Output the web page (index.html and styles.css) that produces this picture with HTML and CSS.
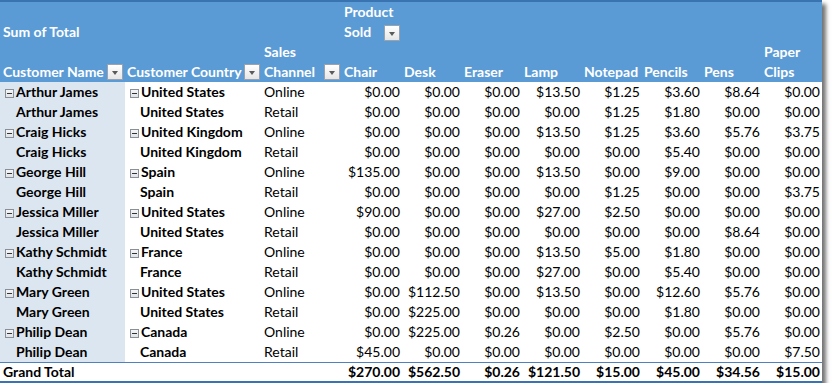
FILE: index.html
```html
<!DOCTYPE html>
<html>
<head>
<meta charset="utf-8">
<link rel="stylesheet" href="styles.css">
</head>
<body>
<div class="sheet">
<table class="pivot">
  <colgroup>
    <col class="c-name"><col class="c-country"><col class="c-channel">
    <col class="c-num"><col class="c-num"><col class="c-num"><col class="c-num">
    <col class="c-num"><col class="c-num"><col class="c-num"><col class="c-num">
  </colgroup>
  <thead>
    <tr class="hrow">
      <th class="h-first">Sum of Total</th>
      <th></th>
      <th></th>
      <th colspan="8" class="h-prod">Product<br>Sold<span class="dd dd-inline"></span></th>
    </tr>
    <tr class="hrow">
      <th class="h-first"><div class="hf"><span>Customer Name</span><span class="dd"></span></div></th>
      <th><div class="hf"><span>Customer Country</span><span class="dd"></span></div></th>
      <th><div class="hf"><span>Sales<br>Channel</span><span class="dd"></span></div></th>
      <th>Chair</th><th>Desk</th><th>Eraser</th><th>Lamp</th>
      <th>Notepad</th><th>Pencils</th><th>Pens</th><th>Paper<br>Clips</th>
    </tr>
  </thead>
  <tbody>
    <tr><td class="nm"><span class="mn"></span>Arthur James</td><td class="ct"><span class="mn"></span>United States</td><td class="ch">Online</td><td>$0.00</td><td>$0.00</td><td>$0.00</td><td>$13.50</td><td>$1.25</td><td>$3.60</td><td>$8.64</td><td>$0.00</td></tr>
    <tr><td class="nm sub">Arthur James</td><td class="ct sub">United States</td><td class="ch">Retail</td><td>$0.00</td><td>$0.00</td><td>$0.00</td><td>$0.00</td><td>$1.25</td><td>$1.80</td><td>$0.00</td><td>$0.00</td></tr>
    <tr><td class="nm"><span class="mn"></span>Craig Hicks</td><td class="ct"><span class="mn"></span>United Kingdom</td><td class="ch">Online</td><td>$0.00</td><td>$0.00</td><td>$0.00</td><td>$13.50</td><td>$1.25</td><td>$3.60</td><td>$5.76</td><td>$3.75</td></tr>
    <tr><td class="nm sub">Craig Hicks</td><td class="ct sub">United Kingdom</td><td class="ch">Retail</td><td>$0.00</td><td>$0.00</td><td>$0.00</td><td>$0.00</td><td>$0.00</td><td>$5.40</td><td>$0.00</td><td>$0.00</td></tr>
    <tr><td class="nm"><span class="mn"></span>George Hill</td><td class="ct"><span class="mn"></span>Spain</td><td class="ch">Online</td><td>$135.00</td><td>$0.00</td><td>$0.00</td><td>$13.50</td><td>$0.00</td><td>$9.00</td><td>$0.00</td><td>$0.00</td></tr>
    <tr><td class="nm sub">George Hill</td><td class="ct sub">Spain</td><td class="ch">Retail</td><td>$0.00</td><td>$0.00</td><td>$0.00</td><td>$0.00</td><td>$1.25</td><td>$0.00</td><td>$0.00</td><td>$3.75</td></tr>
    <tr><td class="nm"><span class="mn"></span>Jessica Miller</td><td class="ct"><span class="mn"></span>United States</td><td class="ch">Online</td><td>$90.00</td><td>$0.00</td><td>$0.00</td><td>$27.00</td><td>$2.50</td><td>$0.00</td><td>$0.00</td><td>$0.00</td></tr>
    <tr><td class="nm sub">Jessica Miller</td><td class="ct sub">United States</td><td class="ch">Retail</td><td>$0.00</td><td>$0.00</td><td>$0.00</td><td>$0.00</td><td>$0.00</td><td>$0.00</td><td>$8.64</td><td>$0.00</td></tr>
    <tr><td class="nm"><span class="mn"></span>Kathy Schmidt</td><td class="ct"><span class="mn"></span>France</td><td class="ch">Online</td><td>$0.00</td><td>$0.00</td><td>$0.00</td><td>$13.50</td><td>$5.00</td><td>$1.80</td><td>$0.00</td><td>$0.00</td></tr>
    <tr><td class="nm sub">Kathy Schmidt</td><td class="ct sub">France</td><td class="ch">Retail</td><td>$0.00</td><td>$0.00</td><td>$0.00</td><td>$27.00</td><td>$0.00</td><td>$5.40</td><td>$0.00</td><td>$0.00</td></tr>
    <tr><td class="nm"><span class="mn"></span>Mary Green</td><td class="ct"><span class="mn"></span>United States</td><td class="ch">Online</td><td>$0.00</td><td>$112.50</td><td>$0.00</td><td>$13.50</td><td>$0.00</td><td>$12.60</td><td>$5.76</td><td>$0.00</td></tr>
    <tr><td class="nm sub">Mary Green</td><td class="ct sub">United States</td><td class="ch">Retail</td><td>$0.00</td><td>$225.00</td><td>$0.00</td><td>$0.00</td><td>$0.00</td><td>$1.80</td><td>$0.00</td><td>$0.00</td></tr>
    <tr><td class="nm"><span class="mn"></span>Philip Dean</td><td class="ct"><span class="mn"></span>Canada</td><td class="ch">Online</td><td>$0.00</td><td>$225.00</td><td>$0.26</td><td>$0.00</td><td>$2.50</td><td>$0.00</td><td>$5.76</td><td>$0.00</td></tr>
    <tr><td class="nm sub">Philip Dean</td><td class="ct sub">Canada</td><td class="ch">Retail</td><td>$45.00</td><td>$0.00</td><td>$0.00</td><td>$0.00</td><td>$0.00</td><td>$0.00</td><td>$0.00</td><td>$7.50</td></tr>
  </tbody>
  <tfoot>
    <tr class="total"><td class="gt">Grand Total</td><td></td><td></td><td>$270.00</td><td>$562.50</td><td>$0.26</td><td>$121.50</td><td>$15.00</td><td>$45.00</td><td>$34.56</td><td>$15.00</td></tr>
  </tfoot>
</table>
</div>
</body>
</html>
```
FILE: styles.css
```css
html, body {
  margin: 0;
  padding: 0;
  background: #ffffff;
}
.sheet {
  width: 822px;
  box-shadow: 4px 4px 4px rgba(0, 0, 0, 0.55);
}
.pivot {
  border-collapse: collapse;
  table-layout: fixed;
  width: 822px;
  font-family: Lato, "Liberation Sans", sans-serif;
  font-size: 14px;
  color: #000;
}
.c-name { width: 125px; }
.c-country { width: 137px; }
.c-channel { width: 80px; }
.c-num { width: 60px; }

.pivot thead {
  background: #5b9bd5;
  border-top: 2px solid #3a74b0;
}
.hrow th {
  height: 40px;
  padding: 0 0 0 2px;
  vertical-align: bottom;
  text-align: left;
  color: #ffffff;
  font-weight: bold;
  line-height: 20px;
  white-space: nowrap;
}
.hrow th.h-first { padding-left: 3px; }
.hf {
  display: flex;
  align-items: flex-end;
  justify-content: space-between;
  padding-right: 2px;
}
.hf .dd { margin-bottom: 2px; }
.dd {
  display: inline-block;
  width: 14px;
  height: 14px;
  border: 1px solid #9aa3ad;
  background: linear-gradient(#ffffff, #e6e6e6);
  position: relative;
  box-sizing: content-box;
}
.dd::after {
  content: "";
  position: absolute;
  left: 4px;
  top: 6px;
  border-left: 3.5px solid transparent;
  border-right: 3.5px solid transparent;
  border-top: 4px solid #5a5a5a;
}
.dd-inline {
  margin-left: 13px;
  vertical-align: -4px;
}

.pivot tbody td,
.pivot tfoot td {
  height: 20px;
  padding: 0 2px 0 0;
  line-height: 20px;
  text-align: right;
  white-space: nowrap;
  overflow: hidden;
}
.pivot tbody td.nm {
  background: #dce6f1;
  text-align: left;
  font-weight: bold;
  padding-left: 5px;
}
.pivot tbody td.ct {
  text-align: left;
  font-weight: bold;
  padding-left: 5px;
}
.pivot tbody td.sub { padding-left: 16px; }
.pivot tbody td.ct.sub { padding-left: 15px; }
.pivot tbody td.ch {
  text-align: left;
  padding-left: 2px;
}
.mn {
  display: inline-block;
  width: 7px;
  height: 7px;
  border: 1px solid #8a8f96;
  background: linear-gradient(#f4f6f8, #dfe3e8);
  position: relative;
  vertical-align: -1px;
  margin-right: 2px;
}
.mn::after {
  content: "";
  position: absolute;
  left: 1px;
  right: 1px;
  top: 3px;
  height: 1px;
  background: #333;
}
.pivot tfoot tr.total {
  border-top: 1px solid #4f81bd;
  border-bottom: 2px solid #3a74b0;
}
.pivot tfoot td {
  height: 18px;
  line-height: 18px;
  font-weight: bold;
}
.pivot tfoot td.gt {
  text-align: left;
  padding-left: 3px;
}
```
